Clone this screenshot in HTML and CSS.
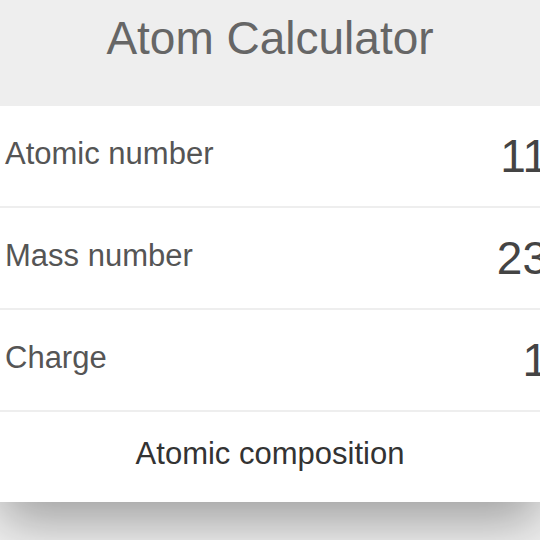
FILE: index.html
```html
<!DOCTYPE html>
<html lang="en">
<head>
    <meta charset="UTF-8">
    <meta name="viewport" content="width=device-width, initial-scale=1.0">
    <title>Atom Calculator</title>
    <link rel="stylesheet" href="styles.css">
</head>
<body>
    <div class="calculator">
        <div class="header">
            <h1>Atom Calculator</h1>
        </div>
        <div class="row">
            <label for="atomic">Atomic number</label>
            <span class="value" id="atomic">11</span>
        </div>
        <div class="row">
            <label for="mass">Mass number</label>
            <span class="value" id="mass">23</span>
        </div>
        <div class="row">
            <label for="charge">Charge</label>
            <span class="value" id="charge">1</span>
        </div>
        <div class="button">Atomic composition</div>
    </div>
</body>
</html>
```

FILE: styles.css
```css
body {
    font-family: "Liberation Sans", Arial, sans-serif;
    background-color: #f2f2f2;
    margin: 0;
    overflow: hidden;
    height: 540px;
}

.calculator {
    background-color: #fff;
    box-shadow: 0 20px 50px rgba(0, 0, 0, 0.35);
}

.header {
    background-color: #eeeeee;
    height: 106px;
    padding-top: 11px;
    box-sizing: border-box;
    text-align: center;
}

h1 {
    margin: 0;
    font-size: 46px;
    font-weight: normal;
    color: #666;
}

.row {
    display: flex;
    justify-content: space-between;
    align-items: center;
    height: 100px;
    padding-left: 5px;
    border-bottom: 2px solid #eeeeee;
}

.row label {
    font-size: 31px;
    color: #555;
    padding-bottom: 5px;
}

.value {
    font-size: 46px;
    color: #444;
    margin-right: -8px;
}

.button {
    height: 90px;
    padding-top: 24px;
    box-sizing: border-box;
    text-align: center;
    font-size: 31px;
    color: #333;
}
```
